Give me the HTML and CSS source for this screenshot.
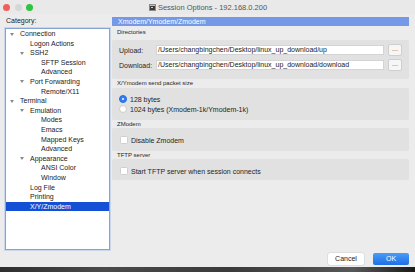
FILE: index.html
```html
<!DOCTYPE html>
<html>
<head>
<meta charset="utf-8">
<title>Session Options</title>
<link rel="stylesheet" href="styles.css">
</head>
<body>
<div class="window">
  <div class="titlebar">
    <div class="lights">
      <span class="light red"></span>
      <span class="light gray"></span>
      <span class="light green"></span>
    </div>
    <div class="title">
      <svg class="ticon" width="7" height="7" viewBox="0 0 7 7"><rect x="0" y="0" width="7" height="7" fill="#8a8a8a"/><rect x="1" y="1" width="5" height="5" fill="#3a3a3a"/><rect x="1" y="1" width="5" height="1" fill="#bdbdbd"/><rect x="2" y="3" width="2" height="1" fill="#cfcfcf"/></svg>
      <span>Session Options - 192.168.0.200</span>
    </div>
    <div></div>
  </div>
  <div class="main">
    <div class="left">
      <div class="cat">Category:</div>
      <div class="tree">
        <div class="row l0"><span class="tw"></span>Connection</div>
        <div class="row l1">Logon Actions</div>
        <div class="row l1"><span class="tw"></span>SSH2</div>
        <div class="row l2">SFTP Session</div>
        <div class="row l2">Advanced</div>
        <div class="row l1"><span class="tw"></span>Port Forwarding</div>
        <div class="row l2">Remote/X11</div>
        <div class="row l0"><span class="tw"></span>Terminal</div>
        <div class="row l1"><span class="tw"></span>Emulation</div>
        <div class="row l2">Modes</div>
        <div class="row l2">Emacs</div>
        <div class="row l2">Mapped Keys</div>
        <div class="row l2">Advanced</div>
        <div class="row l1"><span class="tw"></span>Appearance</div>
        <div class="row l2">ANSI Color</div>
        <div class="row l2">Window</div>
        <div class="row l1">Log File</div>
        <div class="row l1">Printing</div>
        <div class="row l1 sel">X/Y/Zmodem</div>
      </div>
    </div>
    <div class="right">
      <div class="header">Xmodem/Ymodem/Zmodem</div>
      <div class="lbl lbl-first">Directories</div>
      <div class="grp grp-dirs">
        <div class="frow">
          <span class="flabel">Upload:</span>
          <span class="input">/Users/changbingchen/Desktop/linux_up_download/up</span>
          <span class="dots">...</span>
        </div>
        <div class="frow">
          <span class="flabel">Download:</span>
          <span class="input">/Users/changbingchen/Desktop/linux_up_download/download</span>
          <span class="dots">...</span>
        </div>
      </div>
      <div class="lbl">X/Ymodem send packet size</div>
      <div class="grp grp-packet">
        <div class="crow"><span class="radio on"></span>128 bytes</div>
        <div class="crow"><span class="radio"></span>1024 bytes (Xmodem-1k/Ymodem-1k)</div>
      </div>
      <div class="lbl">ZModem</div>
      <div class="grp grp-z">
        <div class="crow"><span class="check"></span>Disable Zmodem</div>
      </div>
      <div class="lbl">TFTP server</div>
      <div class="grp grp-t">
        <div class="crow"><span class="check"></span>Start TFTP server when session connects</div>
      </div>
    </div>
  </div>
  <div class="footer">
    <span class="btn cancel">Cancel</span>
    <span class="btn ok">OK</span>
  </div>
</div>
</body>
</html>
```
FILE: styles.css
```css
html, body {
  margin: 0;
  padding: 0;
}
body {
  width: 415px;
  height: 272px;
  overflow: hidden;
  background: linear-gradient(to right, #2e2e2e 0%, #4a4a4a 25%, #3a3a3a 55%, #575757 85%, #1a1a1a 100%);
  font-family: "Liberation Sans", Arial, sans-serif;
  color: #1c1c1c;
}
.window {
  height: 267px;
  background: #ececec;
  display: flex;
  flex-direction: column;
}
.titlebar {
  height: 14px;
  flex: none;
  display: grid;
  grid-template-columns: 1fr auto 1fr;
  align-items: center;
  background: #e9e9e9;
}
.lights {
  display: flex;
  gap: 4.5px;
  padding-left: 3px;
}
.light {
  width: 7px;
  height: 7px;
  border-radius: 50%;
}
.red { background: #f25d5a; }
.gray { background: #d6d6d6; }
.green { background: #2fc33f; }
.title {
  display: flex;
  align-items: center;
  gap: 2px;
  font-size: 7.5px;
  color: #555;
  padding-left: 1px;
}
.ticon { display: block; }

.main {
  flex: none;
  height: 237px;
  display: flex;
}
.left {
  width: 105px;
  padding-left: 5px;
  flex: none;
  display: flex;
  flex-direction: column;
}
.cat {
  font-size: 7px;
  line-height: 10px;
  padding-top: 2px;
  padding-left: 1px;
  margin-bottom: 2px;
}
.tree {
  height: 220px;
  background: #fff;
  border: 1px solid #86a3d6;
  box-shadow: 0 0 0 1px rgba(140, 175, 235, 0.35);
}
.row {
  height: 9.6px;
  line-height: 9.6px;
  font-size: 7px;
  white-space: nowrap;
  color: #1a1a1a;
}
.l0 { padding-left: 14px; }
.l1 { padding-left: 24px; }
.l2 { padding-left: 35px; }
.tw {
  display: inline-block;
  width: 10px;
  margin-left: -10px;
  vertical-align: top;
  height: 9.6px;
  position: relative;
}
.tw::before {
  content: "";
  display: block;
  margin-top: 3.5px;
  width: 0;
  height: 0;
  border-left: 2px solid transparent;
  border-right: 2px solid transparent;
  border-top: 3.5px solid #8a8a8a;
}
.sel {
  background: #1450d6;
  color: #fff;
}

.right {
  margin-left: 2px;
  width: 297px;
  display: flex;
  flex-direction: column;
}
.header {
  margin-top: 3px;
  height: 9px;
  line-height: 9px;
  background: #7599e6;
  color: #fff;
  font-size: 7px;
  padding-left: 6px;
}
.lbl {
  height: 8px;
  line-height: 8px;
  font-size: 6px;
  color: #262626;
  padding-left: 5px;
}
.lbl-first {
  margin-top: 2px;
  margin-bottom: 4px;
}
.grp {
  background: #e1e1e1;
  border-radius: 2px;
  padding-left: 7px;
  padding-right: 7px;
  display: flex;
  flex-direction: column;
}
.grp-dirs {
  padding-top: 5px;
  padding-bottom: 9px;
  gap: 5px;
}
.grp-packet {
  margin-top: 1px;
  padding-top: 6px;
  padding-bottom: 6px;
}
.grp-z {
  padding-top: 7px;
  padding-bottom: 6px;
}
.grp-t {
  padding-top: 7px;
  padding-bottom: 4px;
}
.frow {
  height: 10px;
  display: flex;
  align-items: center;
  font-size: 7px;
}
.flabel {
  width: 37px;
  flex: none;
  color: #1f1f1f;
}
.input {
  width: 225px;
  height: 8px;
  line-height: 8px;
  background: #fff;
  border: 1px solid #d4d4d4;
  padding-left: 1px;
  white-space: nowrap;
  overflow: hidden;
  color: #222;
}
.dots {
  margin-left: 4px;
  width: 12px;
  height: 10px;
  line-height: 8px;
  text-align: center;
  background: #f6f6f6;
  border: 1px solid #cfcfcf;
  border-radius: 2px;
  font-size: 7px;
  color: #555;
}
.crow {
  height: 10px;
  display: flex;
  align-items: center;
  font-size: 7px;
  color: #1f1f1f;
  white-space: nowrap;
}
.radio {
  width: 6px;
  height: 6px;
  border-radius: 50%;
  background: #fff;
  border: 0.5px solid #cdcdcd;
  margin-right: 3px;
  flex: none;
  position: relative;
}
.radio.on {
  background: #2f7cf3;
  border-color: #2a6fe0;
}
.radio.on::after {
  content: "";
  position: absolute;
  left: 2px;
  top: 2px;
  width: 2.2px;
  height: 2.2px;
  border-radius: 50%;
  background: #fff;
}
.check {
  width: 6px;
  height: 6px;
  background: #fff;
  border: 0.5px solid #cfcfcf;
  border-radius: 1.5px;
  margin-left: 1px;
  margin-right: 3px;
  flex: none;
}

.footer {
  flex: none;
  height: 12px;
  padding: 2px 6px 2px;
  display: flex;
  justify-content: flex-end;
  gap: 9px;
}
.btn {
  width: 36px;
  height: 12px;
  line-height: 12px;
  text-align: center;
  font-size: 7px;
  border-radius: 2px;
}
.cancel {
  background: #fff;
  color: #222;
  box-shadow: 0 0 0 0.5px #cfcfcf;
}
.ok {
  background: linear-gradient(#4b9bf6, #1c6fe6);
  color: #fff;
}
```
